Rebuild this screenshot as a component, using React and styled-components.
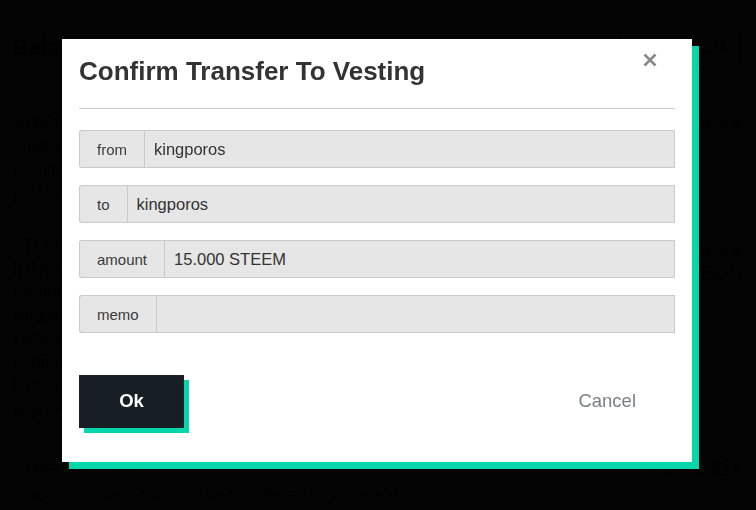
import React from 'react'
import styled, { createGlobalStyle } from 'styled-components'

const GlobalStyle = createGlobalStyle`
  html, body {
    margin: 0;
    padding: 0;
    background: #fff;
    font-family: "Liberation Sans", Arial, sans-serif;
  }
`

const Page = styled.div`
  display: grid;
  grid-template-columns: 440px 1fr;
  padding: 35px 15px 0 13px;
  color: #222;
  height: 510px;
  box-sizing: border-box;
  overflow: hidden;
`

const Heading = styled.div`
  font-size: 22px;
  font-weight: bold;
  height: 76px;
`

const Section = styled.div`
  font-size: 16px;
  line-height: 23.5px;
  margin-bottom: ${p => p.gap || 28}px;
`

const SectionTitle = styled.div`
  text-transform: uppercase;
`

const RightCol = styled.div`
  display: flex;
  flex-direction: column;
  align-items: flex-end;
  font-size: 16px;
  line-height: 23.5px;
`

const PageButton = styled.div`
  border: 1px solid #222;
  border-radius: 3px;
  padding: 11px 14px;
  line-height: 18px;
  margin-top: -8px;
  margin-bottom: 42px;
`

const Value = styled.div`
  margin-bottom: ${p => p.gap || 0}px;
`

const Overlay = styled.div`
  position: fixed;
  inset: 0;
  background: rgba(0, 0, 0, 0.985);
  display: flex;
  align-items: flex-start;
  padding: 39px 0 0 62px;
`

const Modal = styled.div`
  position: relative;
  width: 630px;
  box-sizing: border-box;
  background: #fff;
  padding: 16px 17px 34px;
  box-shadow: 7px 7px 0 #06d6a9;
`

const Close = styled.button`
  position: absolute;
  top: 14px;
  right: 35px;
  width: 14px;
  height: 14px;
  padding: 0;
  border: 0;
  background: none;
  cursor: pointer;
  display: flex;
`

const Title = styled.h1`
  margin: 0;
  font-size: 26px;
  line-height: 32px;
  font-weight: bold;
  color: #333;
`

const Divider = styled.hr`
  margin: 21px 0 21px;
  border: 0;
  border-top: 1px solid #cacaca;
`

const Fields = styled.div`
  display: flex;
  flex-direction: column;
  gap: 17px;
`

const InputGroup = styled.div`
  display: flex;
  height: 38px;
`

const GroupLabel = styled.span`
  display: flex;
  align-items: center;
  padding: 0 17px;
  background: #e6e6e6;
  border: 1px solid #cacaca;
  border-right: 0;
  border-radius: 3px 0 0 3px;
  font-size: 15px;
  color: #3a3a3a;
`

const Field = styled.input`
  flex: 1;
  min-width: 0;
  margin: 0;
  padding: 0 9px;
  background: #e6e6e6;
  border: 1px solid #cacaca;
  font-family: "Liberation Sans", Arial, sans-serif;
  font-size: 16.5px;
  color: #333;
  outline: none;
`

const Footer = styled.div`
  display: flex;
  justify-content: space-between;
  margin-top: 42px;
`

const OkButton = styled.button`
  width: 105px;
  height: 53px;
  padding: 0 0 2px;
  border: 0;
  background: #171f24;
  color: #fff;
  font-family: "Liberation Sans", Arial, sans-serif;
  font-weight: bold;
  font-size: 18.5px;
  box-shadow: 5px 5px 0 #06d6a9;
  cursor: pointer;
`

const CancelButton = styled.button`
  height: 53px;
  padding: 0 39px 2px;
  border: 0;
  background: none;
  color: #788187;
  font-family: "Liberation Sans", Arial, sans-serif;
  font-size: 18.5px;
  cursor: pointer;
`

const fields = [
  { label: 'from', value: 'kingporos' },
  { label: 'to', value: 'kingporos' },
  { label: 'amount', value: '15.000 STEEM' },
  { label: 'memo', value: '' },
]

export default function App() {
  return (
    <>
      <GlobalStyle />
      <Page>
        <div>
          <Heading>Balances</Heading>
          <Section>
            <SectionTitle>Steem</SectionTitle>
            Tradeable tokens that may be transferred anywhere at anytime.
            Steem can be converted to STEEM POWER in a process called powering
            up.
          </Section>
          <Section gap={38}>
            <SectionTitle>Steem Power</SectionTitle>
            Influence tokens which give you more control over post payouts and
            allow you to earn on curation rewards. Part of kingporos's STEEM
            POWER is currently delegated. Delegation is donated for influence or
            to help new users perform actions on steemit. Your delegation
            amount can fluctuate. STEEM POWER increases at an APR of
            approximately 3.22%, subject to blockchain variance.
          </Section>
          <Section>
            <SectionTitle>Steem Dollars</SectionTitle>
            Tradeable tokens that may be transferred anywhere at anytime
          </Section>
        </div>
        <RightCol>
          <PageButton>BUY STEEM</PageButton>
          <Value gap={104}>16.000 STEEM ▾</Value>
          <Value>100.000 STEEM ▾</Value>
          <Value gap={172}>(+0.000 STEEM)</Value>
          <Value>$0.000 USD ▾</Value>
        </RightCol>
      </Page>
      <Overlay>
        <Modal>
          <Close aria-label="close">
            <svg width="14" height="14" viewBox="0 0 14 14">
              <path d="M1.5 1.5L12.5 12.5M12.5 1.5L1.5 12.5" stroke="#8a8a8a" strokeWidth="2.6" />
            </svg>
          </Close>
          <Title>Confirm Transfer To Vesting</Title>
          <Divider />
          <Fields>
            {fields.map(f => (
              <InputGroup key={f.label}>
                <GroupLabel>{f.label}</GroupLabel>
                <Field type="text" value={f.value} disabled readOnly />
              </InputGroup>
            ))}
          </Fields>
          <Footer>
            <OkButton>Ok</OkButton>
            <CancelButton>Cancel</CancelButton>
          </Footer>
        </Modal>
      </Overlay>
    </>
  )
}
